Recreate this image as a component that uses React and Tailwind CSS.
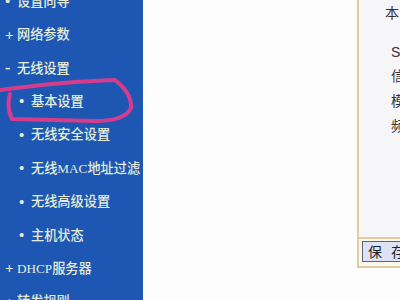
import React from "react";

const items = [
  { t: "设置向导", k: "dot0" },
  { t: "网络参数", k: "plus" },
  { t: "无线设置", k: "minus" },
  { t: "基本设置", k: "sub" },
  { t: "无线安全设置", k: "sub" },
  { t: "无线MAC地址过滤", k: "sub" },
  { t: "无线高级设置", k: "sub" },
  { t: "主机状态", k: "sub" },
  { t: "DHCP服务器", k: "plus" },
  { t: "转发规则", k: "plus" },
];

function Mark({ k }) {
  if (k === "plus") return <span className="w-[11px] text-[15px] font-bold leading-none">+</span>;
  if (k === "minus") return <span className="w-[11px] text-[16px] font-bold leading-none">-</span>;
  return <span className="w-[11px] text-[15px] font-bold leading-none">•</span>;
}

export default function App() {
  return (
    <div
      className="relative flex h-[300px] w-[400px] overflow-hidden bg-[#fdfdfd]"
      style={{ fontFamily: '"Liberation Serif", "Noto Sans CJK SC", serif' }}
    >
      <div className="flex w-[143px] shrink-0 flex-col bg-[#1d57b3] text-[#e4ecd9]">
        <div className="-mt-[15px]" />
        {items.map((it, i) => (
          <div
            key={i}
            className={`flex h-[33.4px] shrink-0 items-center whitespace-nowrap text-[13.2px] font-medium ${
              it.k === "sub" ? "pl-[19px]" : "pl-[5px]"
            }`}
          >
            <Mark k={it.k} />
            <span className="ml-[1px]">{it.t}</span>
          </div>
        ))}
      </div>
      <div className="flex-1 pl-[214px]">
        <div className="flex h-[268px] flex-col border-b-2 border-l-2 border-[#e3cc9e] bg-[#f6f6f8]">
          <div
            className="flex flex-1 flex-col text-[14px] text-[#333]"
            style={{ fontFamily: '"Liberation Sans", "Noto Sans CJK SC", sans-serif' }}
          >
            <div className="mt-[3px] pl-[26px] leading-[20px]">本</div>
            <div className="mt-[19px] pl-[32px] leading-[20px]">SSID</div>
            <div className="mt-[3px] pl-[32px] leading-[22px]">信</div>
            <div className="mt-[3px] pl-[32px] leading-[22px]">模</div>
            <div className="mt-[3px] pl-[32px] leading-[22px]">频</div>
          </div>
          <div className="flex h-[29px] items-start border-t-2 border-[#e3cc9e] bg-[#fbf8f2] pl-[3px] pt-[2px]">
            <div
              className="flex h-[21px] items-center whitespace-nowrap border border-[#5a6478] bg-[#dde3f5] pl-[5px] pr-[8px] text-[14px] tracking-[3px] text-[#222]"
              style={{ fontFamily: '"Noto Sans CJK SC", sans-serif' }}
            >
              保 存
            </div>
          </div>
        </div>
      </div>
      <svg className="pointer-events-none absolute left-0 top-0" width="400" height="300">
        <path
          d="M0,90 C30,86 80,81 115,80 C124,87 132,97 131,108 C127,117 114,121 95,121 L12,119 C8,111 8,101 10,94"
          fill="none"
          stroke="#d63c8e"
          strokeWidth="4"
          strokeLinecap="round"
          strokeLinejoin="round"
        />
      </svg>
    </div>
  );
}
